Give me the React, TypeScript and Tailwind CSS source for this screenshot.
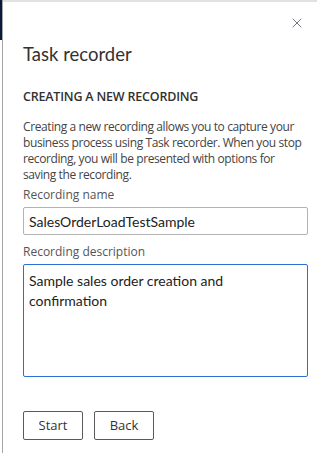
import { X } from "lucide-react";

export default function App() {
  return (
    <div className="flex h-[453px] w-[317px] bg-white font-['Open_Sans',sans-serif] text-[#323130]">
      {/* left rail */}
      <div className="flex w-[2px] flex-col">
        <div className="h-[40px] bg-[#0b1a3a]" />
      </div>
      <div className="w-[1px] bg-[#a6a6a6]" />

      <div className="flex flex-1 flex-col border-t-2 border-[#e1e1e1] pl-[20px] pr-[9px]">
        <div className="flex justify-end pt-[13px] pr-[3px]">
          <X className="h-[16px] w-[16px] text-[#5c4a66]" strokeWidth={1.2} />
        </div>

        <h1 className="mt-[9px] font-['Lato',sans-serif] text-[18.5px] leading-[28px]">Task recorder</h1>

        <h2 className="mt-[20px] text-[12.5px] font-semibold leading-[18px] tracking-[-0.2px]">
          CREATING A NEW RECORDING
        </h2>

        <p className="mt-[13px] text-[12px] leading-[16px] tracking-[-0.4px] text-[#444]">
          Creating a new recording allows you to capture your business process using Task recorder. When you stop
          recording, you will be presented with options for saving the recording.
        </p>

        <label className="mt-[3px] text-[12px] leading-[18px] text-[#555]">Recording name</label>
        <div className="mt-[3px] flex h-[28px] items-center rounded-[2px] border border-[#b3b3b3] px-[5px] font-['Lato',sans-serif] text-[14px] text-[#222]">
          SalesOrderLoadTestSample
        </div>

        <label className="mt-[8px] text-[12px] leading-[18px] text-[#555]">Recording description</label>
        <div className="mt-[3px] h-[113px] rounded-[2px] border border-[#2f6fd1] px-[5px] pt-[6px] font-['Lato',sans-serif] text-[14px] leading-[20px] text-[#222]">
          Sample sales order creation and confirmation
        </div>

        <div className="mt-[34px] flex gap-[11px]">
          <button className="h-[29px] w-[60px] rounded-[2px] border border-[#5a5a5a] text-[13px] text-[#333]">
            Start
          </button>
          <button className="h-[29px] w-[60px] rounded-[2px] border border-[#5a5a5a] text-[13px] text-[#333]">
            Back
          </button>
        </div>
      </div>
    </div>
  );
}
